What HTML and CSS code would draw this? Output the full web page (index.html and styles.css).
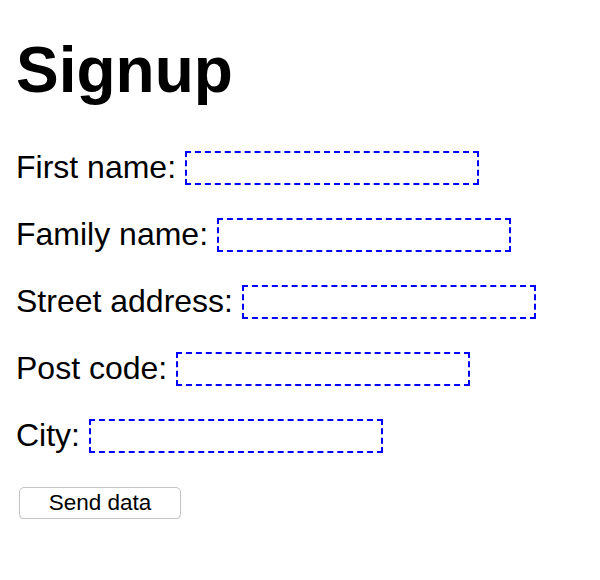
FILE: index.html
```html
<!DOCTYPE html>
<html>
<head>
<meta charset="utf-8">
<link rel="stylesheet" href="styles.css">
</head>
<body>
<h1 class="title">Signup</h1>
<form class="form">
  <div class="row"><label class="label" for="f1">First name:</label><input class="field" id="f1" type="text"></div>
  <div class="row"><label class="label" for="f2">Family name:</label><input class="field" id="f2" type="text"></div>
  <div class="row"><label class="label" for="f3">Street address:</label><input class="field" id="f3" type="text"></div>
  <div class="row"><label class="label" for="f4">Post code:</label><input class="field" id="f4" type="text"></div>
  <div class="row"><label class="label" for="f5">City:</label><input class="field" id="f5" type="text"></div>
  <div class="actions"><button class="btn" type="button">Send data</button></div>
</form>
</body>
</html>
```
FILE: styles.css
```css
html, body { margin: 0; padding: 0; background: #fff; }
body {
  font-family: "Liberation Sans", Arial, Helvetica, sans-serif;
  color: #000;
  padding: 38px 15px 0 16px;
}
.title {
  margin: 0;
  font-size: 64px;
  line-height: 64px;
  font-weight: bold;
}
.form {
  margin-top: 49px;
  display: flex;
  flex-direction: column;
  gap: 33px;
}
.row {
  display: flex;
  align-items: center;
  gap: 9px;
  height: 34px;
}
.label {
  font-size: 32px;
  line-height: 32px;
  padding-bottom: 2px;
}
.field {
  box-sizing: border-box;
  width: 294px;
  height: 34px;
  margin: 0;
  border: 2px dashed #0000ff;
  background: #fff;
  outline: none;
  padding: 0 4px;
  font-size: 20px;
}
.actions {
  padding-left: 3px;
  margin-top: 1px;
}
.btn {
  box-sizing: border-box;
  width: 162px;
  height: 32px;
  margin: 0;
  padding: 0 0 1px 0;
  font-family: "Liberation Sans", Arial, sans-serif;
  font-size: 22.5px;
  color: #000;
  background: #fff;
  border: 1px solid #c4c4c4;
  border-radius: 5px;
  box-shadow: 0 1px 1px rgba(0,0,0,0.12);
}
```
